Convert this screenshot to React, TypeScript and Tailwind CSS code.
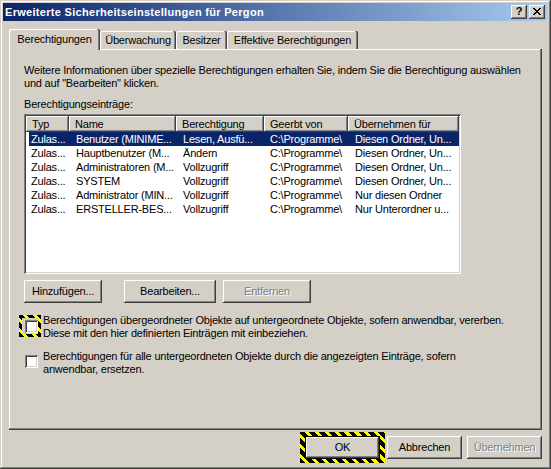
import React from "react";

const raised =
  "shadow-[inset_-1px_-1px_#404040,inset_1px_1px_#fff,inset_-2px_-2px_#808080,inset_2px_2px_#d4d0c8]";

function Btn({
  children,
  w,
  disabled,
}: {
  children: React.ReactNode;
  w: string;
  disabled?: boolean;
}) {
  return (
    <div
      className={`${w} h-[23px] flex items-center justify-center bg-[#d4d0c8] shadow-[inset_-1px_-1px_#404040,inset_1px_1px_#fff,inset_-2px_-2px_#808080,inset_2px_2px_#d4d0c8] ${
        disabled ? "text-[#808080] [text-shadow:1px_1px_0_#fff]" : "text-black"
      }`}
    >
      {children}
    </div>
  );
}

function Checkbox() {
  return (
    <div className="w-[13px] h-[13px] bg-white shadow-[inset_1px_1px_#808080,inset_-1px_-1px_#fff,inset_2px_2px_#404040,inset_-2px_-2px_#d4d0c8]" />
  );
}

function CloseGlyph() {
  const rects: [number, number, number][] = [
    [0, 0, 2],
    [6, 0, 2],
    [1, 1, 2],
    [5, 1, 2],
    [2, 2, 4],
    [3, 3, 2],
    [2, 4, 4],
    [1, 5, 2],
    [5, 5, 2],
    [0, 6, 2],
    [6, 6, 2],
  ];
  return (
    <svg width="8" height="7" viewBox="0 0 8 7" shapeRendering="crispEdges">
      {rects.map(([x, y, w], i) => (
        <rect key={i} x={x} y={y} width={w} height={1} fill="#000" />
      ))}
    </svg>
  );
}

const rows = [
  ["Zulas...", "Benutzer (MINIME...", "Lesen, Ausfü...", "C:\\Programme\\", "Diesen Ordner, Un..."],
  ["Zulas...", "Hauptbenutzer (M...", "Ändern", "C:\\Programme\\", "Diesen Ordner, Un..."],
  ["Zulas...", "Administratoren (M...", "Vollzugriff", "C:\\Programme\\", "Diesen Ordner, Un..."],
  ["Zulas...", "SYSTEM", "Vollzugriff", "C:\\Programme\\", "Diesen Ordner, Un..."],
  ["Zulas...", "Administrator (MIN...", "Vollzugriff", "C:\\Programme\\", "Nur diesen Ordner"],
  ["Zulas...", "ERSTELLER-BES...", "Vollzugriff", "C:\\Programme\\", "Nur Unterordner u..."],
];

const hatch =
  "bg-[repeating-linear-gradient(45deg,#000_0px,#000_4px,#ffff00_4px,#ffff00_7px)]";

export default function App() {
  return (
    <div className="w-[551px] h-[469px] bg-[#d4d0c8] font-['Liberation_Sans',Arial,sans-serif] text-[11px] leading-[13px] tracking-[-0.2px] text-black pt-[3px] pl-[3px] pr-[4px] shadow-[inset_-1px_-1px_#404040,inset_1px_1px_#d4d0c8,inset_-2px_-2px_#808080,inset_2px_2px_#fff] overflow-hidden">
      {/* Title bar */}
      <div className="h-[18px] flex items-center bg-[linear-gradient(to_right,#0a246a,#a6caf0)] pl-[2px] pr-[2px]">
        <span className="flex-1 text-white font-bold tracking-[0.3px] whitespace-nowrap">
          Erweiterte Sicherheitseinstellungen für Pergon
        </span>
        <div className="flex gap-[2px]">
          <div className={`w-[16px] h-[14px] flex items-center justify-center bg-[#d4d0c8] ${raised} font-bold text-[11px] leading-[11px] pb-[1px]`}>
            ?
          </div>
          <div className={`w-[16px] h-[14px] flex items-center justify-center bg-[#d4d0c8] ${raised} pb-[1px]`}>
            <CloseGlyph />
          </div>
        </div>
      </div>

      {/* Tabs */}
      <div className="flex items-end ml-[6px] mt-[8px]">
        <div className="relative z-10 -mb-px h-[21px] w-[91px] bg-[#d4d0c8] rounded-t-[2px] shadow-[inset_-1px_0_#404040,inset_-2px_0_#808080,inset_1px_1px_#fff] flex items-center justify-center pb-[1px]">
          Berechtigungen
        </div>
        <div className="h-[18px] w-[76px] rounded-t-[2px] shadow-[inset_-1px_0_#404040,inset_-2px_0_#808080,inset_1px_1px_#fff] flex items-center justify-center">
          Überwachung
        </div>
        <div className="h-[18px] w-[51px] rounded-t-[2px] shadow-[inset_-1px_0_#404040,inset_-2px_0_#808080,inset_1px_1px_#fff] flex items-center justify-center">
          Besitzer
        </div>
        <div className="h-[18px] w-[131px] rounded-t-[2px] shadow-[inset_-1px_0_#404040,inset_-2px_0_#808080,inset_1px_1px_#fff] flex items-center justify-center">
          Effektive Berechtigungen
        </div>
      </div>

      {/* Panel */}
      <div className="ml-[6px] w-[533px] h-[381px] shadow-[inset_-1px_-1px_#404040,inset_-2px_-2px_#808080,inset_1px_1px_#fff] pl-[15px] pt-[15px] flex flex-col">
        <div className="whitespace-nowrap">
          Weitere Informationen über spezielle Berechtigungen erhalten Sie, indem Sie die Berechtigung auswählen
          <br />
          und auf "Bearbeiten" klicken.
        </div>
        <div className="mt-[8px]">Berechtigungseinträge:</div>

        {/* List view */}
        <div className="mt-[3px] w-[437px] h-[160px] bg-white p-[2px] shadow-[inset_1px_1px_#808080,inset_-1px_-1px_#fff,inset_2px_2px_#404040,inset_-2px_-2px_#d4d0c8] flex flex-col">
          <div className="flex h-[16px] bg-[#d4d0c8]">
            {[
              ["Typ", "w-[43px]"],
              ["Name", "w-[107px]"],
              ["Berechtigung", "w-[88px]"],
              ["Geerbt von", "w-[84px]"],
              ["Übernehmen für", "flex-1"],
            ].map(([t, w]) => (
              <div
                key={t}
                className={`${w} h-[16px] pl-[6px] flex items-center whitespace-nowrap shadow-[inset_-1px_-1px_#404040,inset_1px_1px_#fff,inset_-2px_-2px_#808080]`}
              >
                {t}
              </div>
            ))}
          </div>
          {rows.map((r, i) => (
            <div key={i} className="flex h-[14px] pl-[3px]">
              <div
                className={`flex flex-1 items-center whitespace-nowrap ${
                  i === 0 ? "bg-[#0a246a] text-white" : ""
                }`}
              >
                <div className="w-[40px] pl-[2px]">{r[0]}</div>
                <div className="w-[107px] pl-[7px]">{r[1]}</div>
                <div className="w-[88px] pl-[7px]">{r[2]}</div>
                <div className="w-[84px] pl-[6px]">{r[3]}</div>
                <div className="flex-1 pl-[7px]">{r[4]}</div>
              </div>
            </div>
          ))}
        </div>

        {/* Buttons */}
        <div className="flex mt-[6px]">
          <Btn w="w-[78px]">Hinzufügen...</Btn>
          <div className="ml-[22px]">
            <Btn w="w-[92px]">Bearbeiten...</Btn>
          </div>
          <div className="ml-[7px]">
            <Btn w="w-[88px]" disabled>
              Entfernen
            </Btn>
          </div>
        </div>

        {/* Checkbox 1 */}
        <div className="flex items-start mt-[11px]">
          <div className={`-ml-[5px] mt-[1px] w-[22px] h-[22px] p-[3px] ${hatch}`}>
            <div className="w-[16px] h-[16px] bg-[#d4d0c8] pl-[3px] pt-[2px]">
              <Checkbox />
            </div>
          </div>
          <div className="ml-[2px] whitespace-nowrap">
            Berechtigungen übergeordneter Objekte auf untergeordnete Objekte, sofern anwendbar, vererben.
            <br />
            Diese mit den hier definierten Einträgen mit einbeziehen.
          </div>
        </div>

        {/* Checkbox 2 */}
        <div className="flex items-start mt-[10px]">
          <div className="ml-[1px] mt-[5px]">
            <Checkbox />
          </div>
          <div className="ml-[5px] whitespace-nowrap">
            Berechtigungen für alle untergeordneten Objekte durch die angezeigten Einträge, sofern
            <br />
            anwendbar, ersetzen.
          </div>
        </div>
      </div>

      {/* Bottom buttons */}
      <div className="flex justify-end mt-[2px] mr-[5px]">
        <div className={`px-[5px] py-[4px] ${hatch}`}>
          <div className="w-[75px] h-[23px] flex items-center justify-center bg-[#d4d0c8] shadow-[inset_0_0_0_1px_#000,inset_-2px_-2px_#404040,inset_2px_2px_#fff,inset_-3px_-3px_#808080,inset_3px_3px_#d4d0c8]">
            OK
          </div>
        </div>
        <div className="ml-[2px] mt-[4px]">
          <Btn w="w-[75px]">Abbrechen</Btn>
        </div>
        <div className="ml-[5px] mt-[4px]">
          <Btn w="w-[75px]" disabled>
            Übernehmen
          </Btn>
        </div>
      </div>
    </div>
  );
}
